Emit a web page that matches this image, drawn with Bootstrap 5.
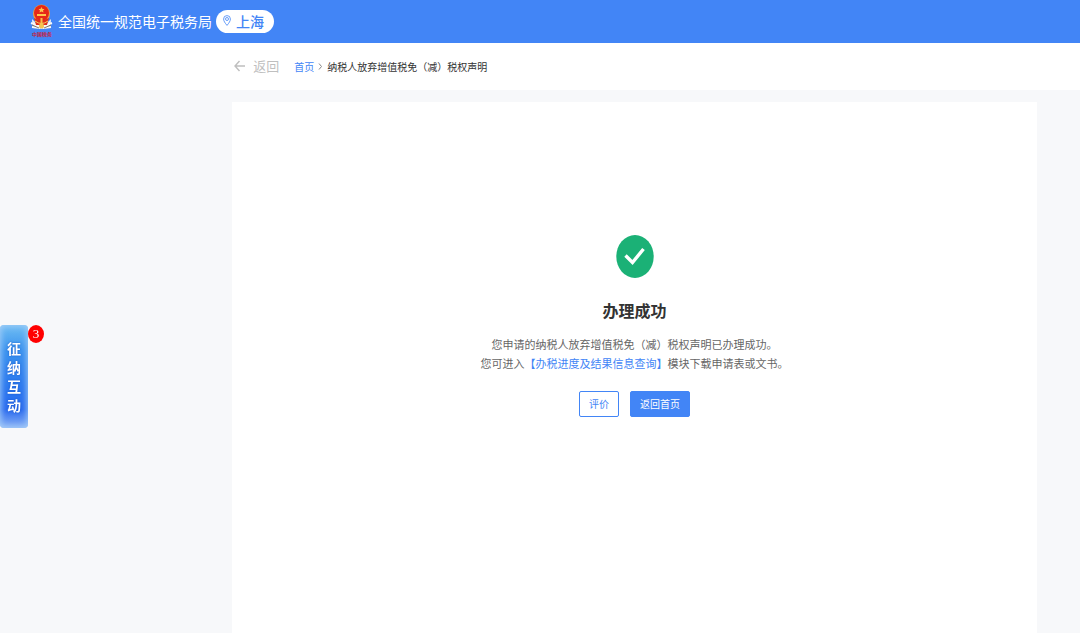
<!DOCTYPE html>
<html lang="zh-CN">
<head>
<meta charset="utf-8">
<meta name="viewport" content="width=device-width, initial-scale=1">
<title>全国统一规范电子税务局</title>
<link href="https://cdn.jsdelivr.net/npm/bootstrap@5.3.0/dist/css/bootstrap.min.css" rel="stylesheet">
<style>
  :root { --brand: #4285f6; }
  body { background: #f7f8fa; color: #333; font-family: "Noto Sans CJK SC", sans-serif; font-size: 11px; }
  a { color: var(--brand); text-decoration: none; }
  .topbar { background: var(--brand); height: 43px; padding-left: 30px; }
  .site-name { font-size: 14px; line-height: 20px; padding-bottom: 2px; margin: 0 4px 0 5px; }
  .region-btn { height: 23px; padding: 0 10px 2px 7px; gap: 5px; color: var(--brand); font-size: 14px; line-height: 20px; font-weight: 500; }
  .crumb-bar { height: 47px; padding: 0 4% 0 21.5%; font-size: 10px; }
  .back-link { color: #bfbfbf; font-size: 13px; gap: 8px; margin: 0 15px 0 2px; padding-bottom: 2px; }
  .page-main { padding: 12px 4% 0 21.5%; }
  .result-panel { padding-top: 133px; }
  .result-title { font-size: 16px; line-height: 24px; font-weight: 700; margin: 20px 0 13px; }
  .result-text { color: #666; line-height: 19px; margin-bottom: 18px; }
  .action-row { gap: 11px; }
  .action-row .btn { --bs-btn-color: var(--brand); --bs-btn-border-color: var(--brand); --bs-btn-bg: #fff;
    --bs-btn-font-size: 10px; --bs-btn-padding-x: 9px; --bs-btn-padding-y: 4px; --bs-btn-line-height: 16px; --bs-btn-border-radius: 2px; }
  .action-row .btn-solid { --bs-btn-color: #fff; --bs-btn-bg: var(--brand); }
  .chat-tab { left: 0; top: 325px; width: 28px; height: 103px; border-radius: 4px; color: #fff;
    font-size: 14px; line-height: 19px; font-weight: 700; padding: 0 7px 0;
    background: linear-gradient(#6fbdf3, #3a92ee 25%, #2b78ee 60%, #2a6bee 82%, #8db4f6);
    box-shadow: inset 0 0 6px 1px #a4cdf8; text-shadow: 0 0 2px #1454c8; }
  .chat-count { left: 28px; top: 0; width: 16px; height: 18px; background: #f00; text-shadow: none;
    font: 13px/17px "Liberation Serif", serif; }
  .emblem-caption { font: 700 5px "Noto Sans CJK SC", sans-serif; }
</style>
</head>
<body class="d-flex flex-column min-vh-100">
<header class="topbar d-flex align-items-center text-white">
  <svg width="23" height="36" viewBox="0 0 23 36" aria-hidden="true">
    <path d="M2 15 Q1 23 11.500 25 Q22 23 21 15 L17 19 H6Z" fill="#e8eef7"/>
    <path d="M1 19 L9 22 M2 23 L10 24 M22 19 L14 22 M21 23 L13 24" stroke="#f8f8f8" stroke-width="2"/>
    <path d="M2 21 L9 24 M21 21 L14 24" stroke="#8a7a67" stroke-width="1"/>
    <ellipse cx="11.500" cy="9.500" rx="8.500" ry="9" fill="#efa43c"/>
    <ellipse cx="11.500" cy="9" rx="7.500" ry="8" fill="#e62718"/>
    <path d="M11.500 3 l1 2 2 0 -1.500 1.500 .5 2 -2-1 -2 1 .5-2 -1.500-1.500 2 0Z M7 10 H16 V12 H7Z" fill="#ffc64b"/>
    <path d="M4 14 Q11.500 18 19 14 L17 21 H6Z" fill="#df2d1c"/>
    <path d="M11.500 14 V24" stroke="#f4c247" stroke-width="2"/>
    <path d="M5 17 Q11.500 22 18 17" fill="none" stroke="#f7cf59" stroke-width="1"/>
    <circle cx="11.500" cy="22" r="2.500" fill="#f3c451"/>
    <text class="emblem-caption" x="2" y="32" fill="#c51f3f">中国税务</text>
  </svg>
  <span class="site-name text-nowrap">全国统一规范电子税务局</span>
  <button type="button" class="region-btn btn rounded-pill bg-white border-0 d-flex align-items-center text-nowrap">
    <svg width="8" height="11" viewBox="0 0 8 11" fill="none" stroke="currentColor" stroke-width=".8" aria-hidden="true"><path d="M4 10.400 C2 8 .6 6 .6 4 A3.400 3.400 0 0 1 7.400 4 C7.400 6 6 8 4 10.400Z"/><circle cx="4" cy="4" r="1.500"/></svg>
    上海
  </button>
</header>

<nav class="crumb-bar bg-white d-flex align-items-center" aria-label="面包屑">
  <a href="#" class="back-link d-flex align-items-center">
    <svg width="11" height="12" viewBox="0 0 11 12" fill="none" stroke="currentColor" stroke-width="1.400" aria-hidden="true"><path d="M11 6 H1 M5.500 1 L1 6 L5.500 11"/></svg>
    返回
  </a>
  <a href="#">首页</a>
  <svg class="mx-1" width="5" height="7" viewBox="0 0 5 7" fill="none" stroke="#888" aria-hidden="true"><path d="M1 .5 L3.500 3.500 L1 6.500"/></svg>
  <span>纳税人放弃增值税免（减）税权声明</span>
</nav>

<main class="page-main flex-fill d-flex">
  <section class="result-panel bg-white flex-fill d-flex flex-column align-items-center text-center">
    <svg width="38" height="43" viewBox="0 0 38 43" aria-hidden="true"><ellipse cx="19" cy="21.500" rx="18.700" ry="21.500" fill="#1bb176"/><path d="M9.500 20.500 L16.500 27.500 L27.500 14" fill="none" stroke="#fff" stroke-width="3.400"/></svg>
    <h1 class="result-title">办理成功</h1>
    <p class="result-text">您申请的纳税人放弃增值税免（减）税权声明已办理成功。<br>您可进入<a href="#">【办税进度及结果信息查询】</a>模块下载申请表或文书。</p>
    <div class="action-row d-flex">
      <button type="button" class="btn">评价</button>
      <button type="button" class="btn btn-solid">返回首页</button>
    </div>
  </section>
</main>

<button type="button" class="chat-tab position-fixed border-0">征纳互动<span class="chat-count position-absolute rounded-circle">3</span></button>
<script src="https://cdn.jsdelivr.net/npm/bootstrap@5.3.0/dist/js/bootstrap.bundle.min.js"></script>
</body>
</html>
